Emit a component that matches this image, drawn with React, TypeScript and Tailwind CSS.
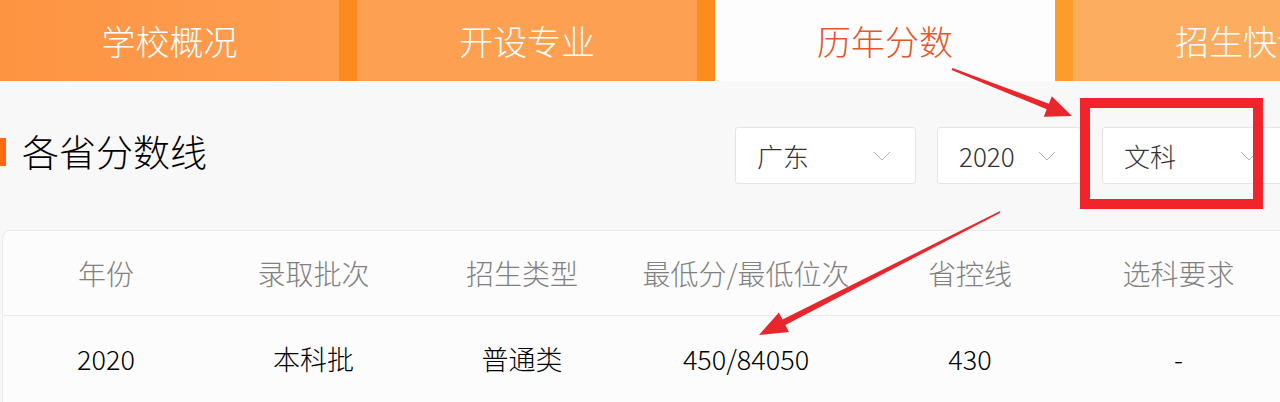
import React from "react";

function arrowPoints(tx: number, ty: number, hx: number, hy: number, tailW: number, shaftW: number, headLen: number, headW: number) {
  const dx = hx - tx;
  const dy = hy - ty;
  const len = Math.sqrt(dx * dx + dy * dy);
  const ux = dx / len;
  const uy = dy / len;
  const nx = -uy;
  const ny = ux;
  const bx = hx - ux * headLen;
  const by = hy - uy * headLen;
  const pts = [
    [tx + nx * tailW, ty + ny * tailW],
    [bx + nx * shaftW, by + ny * shaftW],
    [bx + nx * headW, by + ny * headW],
    [hx, hy],
    [bx - nx * headW, by - ny * headW],
    [bx - nx * shaftW, by - ny * shaftW],
    [tx - nx * tailW, ty - ny * tailW],
  ];
  return pts.map((p) => `${p[0].toFixed(1)},${p[1].toFixed(1)}`).join(" ");
}

function Chevron() {
  return (
    <svg width="18" height="10" viewBox="0 0 18 10" className="flex-none">
      <polyline points="1,1 9,9 17,1" fill="none" stroke="#b0b0b0" strokeWidth="1" />
    </svg>
  );
}

function Select({ label, width }: { label: string; width: string }) {
  return (
    <div className={`${width} h-[57px] flex-none flex items-center justify-between pl-[21px] pr-[24px] bg-white border border-[#e4e4e4] rounded-[3px]`}>
      <span className="text-[26px] text-[#333333] leading-none">{label}</span>
      <Chevron />
    </div>
  );
}

export default function App() {
  const headers = ["年份", "录取批次", "招生类型", "最低分/最低位次", "省控线", "选科要求"];
  const row = ["2020", "本科批", "普通类", "450/84050", "430", "-"];
  const widths = ["w-[206px]", "w-[209px]", "w-[208px]", "w-[240px]", "w-[208px]", "w-[209px]"];

  return (
    <div className="relative w-[1280px] h-[402px] overflow-hidden bg-[#f8f8f9] font-light font-['Noto_Sans_CJK_SC','Noto_Sans',sans-serif]">
      {/* Tabs */}
      <div className="flex h-[81px] w-[1500px]">
        <div className="w-[339px] flex-none flex items-center justify-center bg-gradient-to-r from-[#fd9442] to-[#fe9e51] text-white text-[34px]">学校概况</div>
        <div className="w-[18px] flex-none bg-[#fd8a1f]" />
        <div className="w-[340px] flex-none flex items-center justify-center bg-[#fea052] text-white text-[34px]">开设专业</div>
        <div className="w-[18px] flex-none bg-[#fd8c1f]" />
        <div className="w-[340px] flex-none flex items-center justify-center bg-[#fdfdfd] text-[#e4562a] text-[34px]">历年分数</div>
        <div className="w-[18px] flex-none bg-[#fc9c2c]" />
        <div className="w-[340px] flex-none flex items-center justify-center bg-[#fdad5f] text-white text-[34px]">招生快讯</div>
      </div>

      {/* Heading + selects */}
      <div className="flex items-center h-[149px] w-[1500px]">
        <div className="w-[735px] flex-none flex items-center mb-[8px]">
          <div className="w-[6px] h-[28px] bg-[#ff6a13]" />
          <span className="ml-[16px] text-[37px] text-[#000000] leading-none">各省分数线</span>
        </div>
        <div className="flex gap-[21px]">
          <Select label="广东" width="w-[181px]" />
          <Select label="2020" width="w-[144px]" />
          <Select label="文科" width="w-[181px]" />
        </div>
      </div>

      {/* Table card */}
      <div className="ml-[2px] w-[1300px] bg-[#fcfcfd] border-l border-t border-[#ebebeb] rounded-tl-[8px]">
        <div className="flex h-[85px] items-center border-b border-[#e9e9e9]">
          {headers.map((h, i) => (
            <div key={h} className={`${widths[i]} flex-none text-center text-[28px] text-[#808080]`}>{h}</div>
          ))}
        </div>
        <div className="flex h-[87px] items-center">
          {row.map((c, i) => (
            <div key={i} className={`${widths[i]} flex-none text-center text-[27px] text-[#000000]`}>{c}</div>
          ))}
        </div>
      </div>

      {/* Annotations overlay */}
      <svg className="absolute left-0 top-0 pointer-events-none" width="1280" height="402" viewBox="0 0 1280 402">
        <rect x="1085" y="103" width="173" height="101" fill="none" stroke="#f0242a" strokeWidth="10" />
        <polygon points={arrowPoints(952, 69, 1072, 116, 1, 3, 26, 11)} fill="#e8262b" />
        <polygon points={arrowPoints(1000, 212, 759, 335, 0.8, 3.2, 28, 11)} fill="#e8262b" />
      </svg>
    </div>
  );
}
